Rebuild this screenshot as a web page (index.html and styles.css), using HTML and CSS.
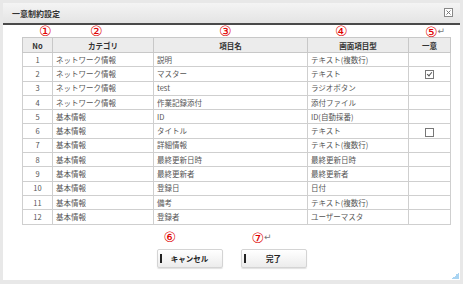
FILE: index.html
```html
<!DOCTYPE html>
<html lang="ja">
<head>
    <meta charset="UTF-8">
    <title>一意制約設定</title>
    <link rel="stylesheet" href="styles.css">
</head>
<body>
    <div class="dialog">
        <div class="dialog-header">
            <span class="dialog-title">一意制約設定</span>
            <span class="close-btn">
                <svg width="9" height="9" viewBox="0 0 9 9"><rect x="0.5" y="0.5" width="8" height="8" fill="#fff" stroke="#888"/><path d="M2.5 2.5 L6.5 6.5 M6.5 2.5 L2.5 6.5" stroke="#777" stroke-width="1"/></svg>
            </span>
        </div>

        <div class="dialog-body">
            <div class="table-wrap">
                <span class="mark m1">①</span>
                <span class="mark m2">②</span>
                <span class="mark m3">③</span>
                <span class="mark m4">④</span>
                <span class="mark m5">⑤<i class="ret">↵</i></span>

                <table class="grid">
                    <colgroup>
                        <col class="c-no">
                        <col class="c-cat">
                        <col class="c-name">
                        <col class="c-type">
                        <col class="c-uniq">
                    </colgroup>
                    <thead>
                        <tr>
                            <th>No</th>
                            <th>カテゴリ</th>
                            <th>項目名</th>
                            <th>画面項目型</th>
                            <th>一意</th>
                        </tr>
                    </thead>
                    <tbody>
                        <tr><td class="num">1</td><td>ネットワーク情報</td><td>説明</td><td>テキスト(複数行)</td><td class="chk"></td></tr>
                        <tr><td class="num">2</td><td>ネットワーク情報</td><td>マスター</td><td>テキスト</td><td class="chk"><span class="box checked"></span></td></tr>
                        <tr><td class="num">3</td><td>ネットワーク情報</td><td>test</td><td>ラジオボタン</td><td class="chk"></td></tr>
                        <tr><td class="num">4</td><td>ネットワーク情報</td><td>作業記録添付</td><td>添付ファイル</td><td class="chk"></td></tr>
                        <tr><td class="num">5</td><td>基本情報</td><td>ID</td><td>ID(自動採番)</td><td class="chk"></td></tr>
                        <tr><td class="num">6</td><td>基本情報</td><td>タイトル</td><td>テキスト</td><td class="chk"><span class="box"></span></td></tr>
                        <tr><td class="num">7</td><td>基本情報</td><td>詳細情報</td><td>テキスト(複数行)</td><td class="chk"></td></tr>
                        <tr><td class="num">8</td><td>基本情報</td><td>最終更新日時</td><td>最終更新日時</td><td class="chk"></td></tr>
                        <tr><td class="num">9</td><td>基本情報</td><td>最終更新者</td><td>最終更新者</td><td class="chk"></td></tr>
                        <tr><td class="num">10</td><td>基本情報</td><td>登録日</td><td>日付</td><td class="chk"></td></tr>
                        <tr><td class="num">11</td><td>基本情報</td><td>備考</td><td>テキスト(複数行)</td><td class="chk"></td></tr>
                        <tr><td class="num">12</td><td>基本情報</td><td>登録者</td><td>ユーザーマスタ</td><td class="chk"></td></tr>
                    </tbody>
                </table>
            </div>

            <div class="buttons">
                <div class="btn-wrap">
                    <span class="mark m6">⑥</span>
                    <button class="btn">キャンセル</button>
                </div>
                <div class="btn-wrap">
                    <span class="mark m7">⑦<i class="ret">↵</i></span>
                    <button class="btn">完了</button>
                </div>
            </div>
        </div>

        <span class="grip"></span>
    </div>
</body>
</html>
```

FILE: styles.css
```css
body {
    margin: 0;
    padding: 3px 3px 4px 3px;
    background-color: #e8e8e8;
    font-family: "Noto Sans CJK JP", "Noto Sans", sans-serif;
    color: #555;
}

.dialog {
    position: relative;
    height: 277px;
    background: #ffffff;
}

.dialog-header {
    height: 20px;
    display: flex;
    align-items: center;
    justify-content: space-between;
    padding: 0 7px 0 9px;
    background: linear-gradient(#f4f4f4, #e4e4e4);
    border-bottom: 2px solid #4a4a4a;
}
.dialog-title {
    font-size: 8px;
    font-weight: bold;
    color: #333;
}
.close-btn {
    display: flex;
    margin-top: -2px;
}

.dialog-body {
    padding: 12px 10px 0 19px;
}

.table-wrap {
    position: relative;
}

.grid {
    width: 428px;
    border-collapse: collapse;
    table-layout: fixed;
    font-size: 7.5px;
}
.c-no { width: 30px; }
.c-cat { width: 101px; }
.c-name { width: 154px; }
.c-type { width: 101px; }
.c-uniq { width: 42px; }

.grid th {
    height: 14px;
    padding: 0;
    background: #ececec;
    border: 1px solid #c8c8c8;
    color: #333;
    font-weight: bold;
    text-align: center;
}
.grid td {
    height: 13.3px;
    padding: 0 3px;
    border: 1px solid #cfcfcf;
    color: #555;
    white-space: nowrap;
    line-height: 12px;
}
.grid td.num {
    text-align: center;
    padding: 0;
}
.grid td.chk {
    text-align: center;
    padding: 0;
}

.box {
    display: inline-block;
    width: 7px;
    height: 7px;
    border: 1px solid #777;
    vertical-align: middle;
    position: relative;
}
.box.checked::after {
    content: "";
    position: absolute;
    left: 2px;
    top: 0px;
    width: 2px;
    height: 4px;
    border: solid #555;
    border-width: 0 1px 1px 0;
    transform: rotate(40deg);
}

/* red annotation numbers */
.mark {
    position: absolute;
    color: #e00000;
    font-family: "DejaVu Sans", sans-serif;
    font-size: 14px;
    line-height: 14px;
    top: -13px;
}
.mark .ret {
    font-style: normal;
    color: #777;
    font-size: 9px;
    margin-left: 0;
    vertical-align: 3px;
}
.m1 { left: 17px; }
.m2 { left: 68px; }
.m3 { left: 197px; }
.m4 { left: 313px; }
.m5 { left: 403px; }

.buttons {
    display: flex;
    justify-content: center;
    gap: 18px;
    margin-top: 18px;
    padding-right: 9px;
}
.btn-wrap {
    position: relative;
}
.btn {
    position: relative;
    width: 66px;
    height: 19px;
    border: 1px solid #d4d4d4;
    border-radius: 2px;
    background: linear-gradient(#ffffff, #ececec);
    box-shadow: 0 1px 1px rgba(0, 0, 0, 0.12);
    font-family: "Noto Sans CJK JP", sans-serif;
    font-size: 7.5px;
    font-weight: bold;
    color: #222;
    padding: 0;
}
.btn::before {
    content: "";
    position: absolute;
    left: 2px;
    top: 4px;
    width: 2px;
    height: 9px;
    background: #222;
}
.m6 { left: 7px; top: -13px; }
.m7 { left: 11px; top: -13px; }

.grip {
    position: absolute;
    right: 1px;
    bottom: 1px;
    width: 7px;
    height: 7px;
    background: linear-gradient(135deg, transparent 50%, #a9d4f2 50%);
}
```
